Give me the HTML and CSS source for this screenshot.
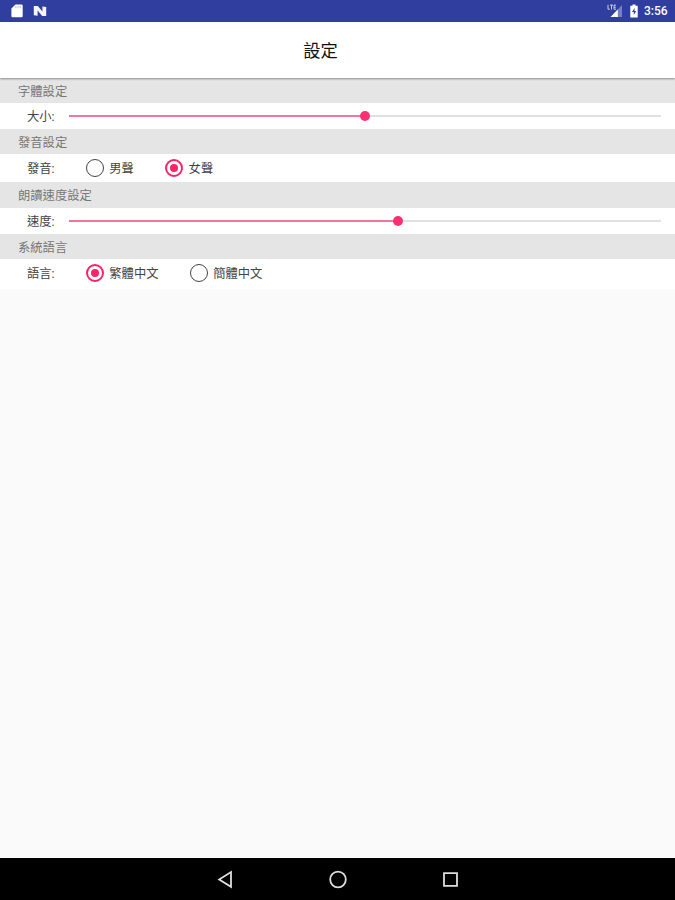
FILE: index.html
```html
<!DOCTYPE html>
<html lang="zh-Hant">
<head>
<meta charset="utf-8">
<title>設定</title>
<link rel="stylesheet" href="styles.css">
</head>
<body>
<div class="status">
  <svg class="sd" width="12" height="14" viewBox="0 0 12 14"><path d="M4.5 .5H10.5Q11.7.5 11.7 1.8V12Q11.7 13.3 10.5 13.3H1.6Q.4 13.3.4 12V4.6Z" fill="#fff"/><path d="M4.8 2v2.2M7 2v2.2M9.2 2v2.2" stroke="#b9bfdd" stroke-width="1"/></svg>
  <svg class="n" width="14" height="12" viewBox="0 0 14 12"><path d="M.8 1H4.8L9.4 6.4V1.4L13.2 2V11H9.2L4.6 5.6V10.8L.8 10.2Z" fill="#f4f5ff"/></svg>
  <svg class="signal" width="16" height="14" viewBox="0 0 16 14"><path d="M15 1V13H3.5Z" fill="#7481bf"/><path d="M10.8 5.4V13H3.5Z" fill="#fff"/><path d="M1 .8V5.2H2.8M3 1.1H6M4.5 1V5.5M9 1.1H7V5.2H9M7 3.2H8.8" stroke="#c6ccea" stroke-width="1" fill="none"/></svg>
  <svg class="battery" width="8" height="14" viewBox="0 0 8 14"><path d="M2.5 .4H5.5V1.7H7.7V13.5H.3V1.7H2.5Z" fill="#fff"/><path d="M4.6 4L2 8H3.8V11L6.2 7H4.5Z" fill="#303f9f"/></svg>
  <span class="clock">3:56</span>
</div>
<header class="bar">設定</header>
<main>
  <h2>字體設定</h2>
  <div class="row slider-row">
    <span class="label">大小:</span>
    <div class="track"><div class="fill" style="width:50%"><i class="thumb"></i></div></div>
  </div>
  <h2>發音設定</h2>
  <div class="row radio-row">
    <span class="label">發音:</span>
    <span class="option first"><i class="radio"></i>男聲</span>
    <span class="option"><i class="radio on"></i>女聲</span>
  </div>
  <h2 class="tall">朗讀速度設定</h2>
  <div class="row slider-row">
    <span class="label">速度:</span>
    <div class="track"><div class="fill" style="width:55.6%"><i class="thumb"></i></div></div>
  </div>
  <h2>系統語言</h2>
  <div class="row radio-row last">
    <span class="label">語言:</span>
    <span class="option first"><i class="radio on"></i>繁體中文</span>
    <span class="option"><i class="radio"></i>簡體中文</span>
  </div>
</main>
<nav class="nav">
  <svg width="20" height="20" viewBox="0 0 20 20"><path d="M16 2.1V16.8L4.2 9.5Z"/></svg>
  <svg width="20" height="20" viewBox="0 0 20 20"><circle cx="10" cy="9.5" r="7.8"/></svg>
  <svg width="20" height="20" viewBox="0 0 20 20"><path d="M4 3.1H17V15.9H4Z"/></svg>
</nav>
</body>
</html>
```
FILE: styles.css
```css
* { box-sizing: border-box; }
body {
  margin: 0;
  width: 675px;
  height: 900px;
  display: flex;
  flex-direction: column;
  overflow: hidden;
  background: #fafafa;
  color: #444;
  font-family: Roboto, "Noto Sans CJK TC", sans-serif;
  font-size: 12.3px;
}
.status {
  height: 22px;
  flex: none;
  display: flex;
  align-items: center;
  padding: 0 7px 0 11px;
  background: #303f9f;
}
.n { margin-left: 10px; }
.signal { margin-left: auto; }
.battery { margin: 0 6px 0 7px; }
.clock {
  width: 24px;
  color: #fff;
  font-size: 12px;
  font-weight: 500;
  line-height: 23px;
  white-space: nowrap;
}
.bar {
  position: relative;
  height: 56px;
  flex: none;
  padding: 1px 34px 0 0;
  background: #fff;
  color: #111;
  font-size: 17.3px;
  line-height: 57px;
  text-align: center;
  box-shadow: 0 1px 2px rgba(0, 0, 0, .4);
}
main { flex: 1; }
h2 {
  height: 25px;
  margin: 0;
  padding: 1px 0 0 18px;
  background: #e5e5e5;
  color: #777;
  font-size: 12.3px;
  font-weight: 400;
  line-height: 26px;
}
.tall { height: 26px; }
.row {
  display: flex;
  align-items: center;
  padding-left: 27px;
  background: #fff;
}
.slider-row { height: 26px; padding-right: 14px; }
.radio-row { height: 28px; }
.last { height: 30px; padding-bottom: 2px; }
.label { width: 42px; flex: none; }
.track { flex: 1; height: 2px; background: #e0e0e0; }
.fill { position: relative; height: 2px; background: #f4749c; }
.thumb {
  position: absolute;
  top: -4px;
  right: -5px;
  width: 10px;
  height: 10px;
  border-radius: 50%;
  background: #fa2f74;
}
.option { display: flex; align-items: center; margin-left: 31.4px; }
.first { margin-left: 17px; }
.radio {
  display: grid;
  place-items: center;
  width: 18px;
  height: 18px;
  margin-right: 5.3px;
  border: 1.5px solid #444;
  border-radius: 50%;
}
.on { border: 2px solid #fa2468; }
.on::after {
  content: "";
  width: 8px;
  height: 8px;
  border-radius: 50%;
  background: #fa2468;
}
.nav {
  height: 42px;
  flex: none;
  display: flex;
  justify-content: center;
  align-items: center;
  gap: 92.5px;
  padding-top: 1px;
  background: #000;
}
.nav svg { fill: none; stroke: #ddd; stroke-width: 1.8; }
```
